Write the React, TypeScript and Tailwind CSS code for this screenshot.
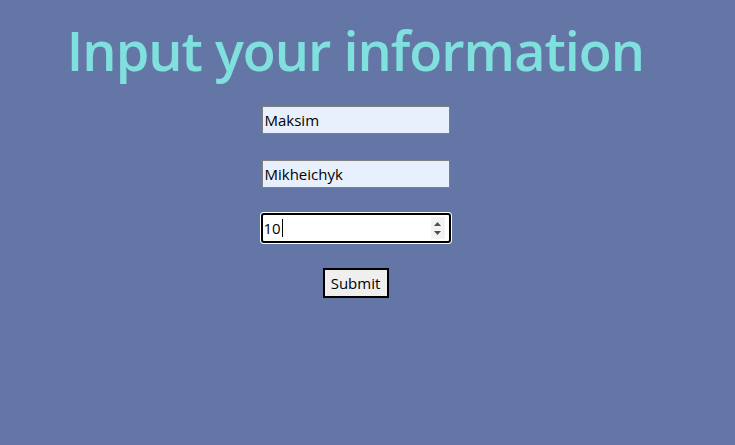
export default function App() {
  return (
    <div className="min-h-[445px] w-full bg-[#6476a6] font-['Open_Sans','Noto_Sans',sans-serif]">
      <div className="flex w-[711px] flex-col items-center">
        <h1 className="mt-[14px] text-[54px] font-semibold leading-[72px] tracking-[-1px] text-[#80e0de]">
          Input your information
        </h1>
        <form className="mt-[20px] flex flex-col items-center">
          <input
            type="text"
            defaultValue="Maksim"
            className="h-[28px] w-[188px] border border-[#7f7f7f] bg-[#e8f0fe] px-[2px] text-[15px] text-black outline-none"
          />
          <input
            type="text"
            defaultValue="Mikheichyk"
            className="mt-[26px] h-[28px] w-[188px] border border-[#7f7f7f] bg-[#e8f0fe] px-[2px] text-[15px] text-black outline-none"
          />
          <div className="mt-[25px] flex h-[30px] w-[190px] items-center rounded-[3px] border-2 border-black bg-white pl-[1px] pr-[4px] shadow-[0_0_0_1px_#ffffff]">
            <span className="text-[15px] text-black">10</span>
            <span className="ml-[1px] h-[18px] w-px bg-black" />
            <div className="ml-auto flex h-[22px] w-[14px] flex-col items-center justify-center gap-[5px] bg-[#f3f3f3]">
              <svg width="7" height="4" viewBox="0 0 7 4"><path d="M3.5 0L7 4H0z" fill="#505050" /></svg>
              <svg width="7" height="4" viewBox="0 0 7 4"><path d="M0 0H7L3.5 4z" fill="#505050" /></svg>
            </div>
          </div>
          <button
            type="button"
            className="mt-[25px] h-[30px] w-[66px] border-2 border-black bg-[#efefef] text-[15px] text-black"
          >
            Submit
          </button>
        </form>
      </div>
    </div>
  );
}
